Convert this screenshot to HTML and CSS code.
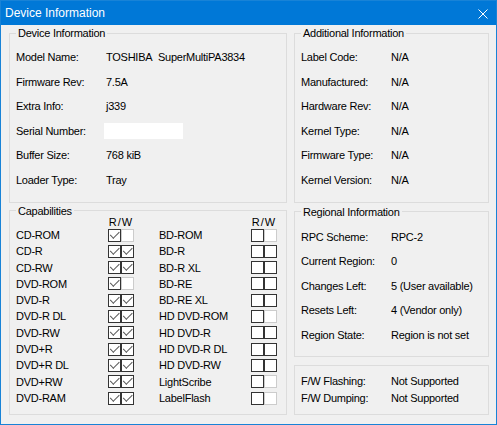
FILE: index.html
```html
<!DOCTYPE html>
<html>
<head>
<meta charset="utf-8">
<title>Device Information</title>
<link rel="stylesheet" href="styles.css">
</head>
<body>
<div class="window">
  <div class="titlebar">
    <span class="title">Device Information</span>
    <svg class="close" width="10" height="10" viewBox="0 0 10 10"><path d="M0.5 0.5 L9.5 9.5 M9.5 0.5 L0.5 9.5" stroke="#fff" stroke-width="1" fill="none"/></svg>
  </div>
  <div class="content">
    <div class="col">
      <fieldset class="grp grp-dev">
        <legend>Device Information</legend>
        <div class="info">
          <span>Model Name:</span><span>TOSHIBA&nbsp; SuperMultiPA3834</span>
          <span>Firmware Rev:</span><span>7.5A</span>
          <span>Extra Info:</span><span>j339</span>
          <span>Serial Number:</span><span class="serialcell"><span class="serial"></span></span>
          <span>Buffer Size:</span><span>768 kiB</span>
          <span>Loader Type:</span><span>Tray</span>
        </div>
      </fieldset>
      <fieldset class="grp grp-cap">
        <legend>Capabilities</legend>
        <div class="caps">
          <div class="capcol">
            <div class="caphead"><span></span><span class="rw">R/W</span></div>
            <div class="cap"><span>CD-ROM</span><span class="pair"><i class="cb on"></i><i class="cb dis"></i></span></div>
            <div class="cap"><span>CD-R</span><span class="pair"><i class="cb on"></i><i class="cb on"></i></span></div>
            <div class="cap"><span>CD-RW</span><span class="pair"><i class="cb on"></i><i class="cb on"></i></span></div>
            <div class="cap"><span>DVD-ROM</span><span class="pair"><i class="cb on"></i><i class="cb dis"></i></span></div>
            <div class="cap"><span>DVD-R</span><span class="pair"><i class="cb on"></i><i class="cb on"></i></span></div>
            <div class="cap"><span>DVD-R DL</span><span class="pair"><i class="cb on"></i><i class="cb on"></i></span></div>
            <div class="cap"><span>DVD-RW</span><span class="pair"><i class="cb on"></i><i class="cb on"></i></span></div>
            <div class="cap"><span>DVD+R</span><span class="pair"><i class="cb on"></i><i class="cb on"></i></span></div>
            <div class="cap"><span>DVD+R DL</span><span class="pair"><i class="cb on"></i><i class="cb on"></i></span></div>
            <div class="cap"><span>DVD+RW</span><span class="pair"><i class="cb on"></i><i class="cb on"></i></span></div>
            <div class="cap"><span>DVD-RAM</span><span class="pair"><i class="cb on"></i><i class="cb on"></i></span></div>
          </div>
          <div class="capcol">
            <div class="caphead"><span></span><span class="rw">R/W</span></div>
            <div class="cap"><span>BD-ROM</span><span class="pair"><i class="cb"></i><i class="cb dis"></i></span></div>
            <div class="cap"><span>BD-R</span><span class="pair"><i class="cb"></i><i class="cb"></i></span></div>
            <div class="cap"><span>BD-R XL</span><span class="pair"><i class="cb"></i><i class="cb"></i></span></div>
            <div class="cap"><span>BD-RE</span><span class="pair"><i class="cb"></i><i class="cb"></i></span></div>
            <div class="cap"><span>BD-RE XL</span><span class="pair"><i class="cb"></i><i class="cb"></i></span></div>
            <div class="cap"><span>HD DVD-ROM</span><span class="pair"><i class="cb"></i><i class="cb dis"></i></span></div>
            <div class="cap"><span>HD DVD-R</span><span class="pair"><i class="cb"></i><i class="cb"></i></span></div>
            <div class="cap"><span>HD DVD-R DL</span><span class="pair"><i class="cb"></i><i class="cb"></i></span></div>
            <div class="cap"><span>HD DVD-RW</span><span class="pair"><i class="cb"></i><i class="cb"></i></span></div>
            <div class="cap"><span>LightScribe</span><span class="pair"><i class="cb"></i><i class="cb dis"></i></span></div>
            <div class="cap"><span>LabelFlash</span><span class="pair"><i class="cb"></i><i class="cb dis"></i></span></div>
          </div>
        </div>
      </fieldset>
    </div>
    <div class="col">
      <fieldset class="grp grp-dev">
        <legend>Additional Information</legend>
        <div class="info">
          <span>Label Code:</span><span>N/A</span>
          <span>Manufactured:</span><span>N/A</span>
          <span>Hardware Rev:</span><span>N/A</span>
          <span>Kernel Type:</span><span>N/A</span>
          <span>Firmware Type:</span><span>N/A</span>
          <span>Kernel Version:</span><span>N/A</span>
        </div>
      </fieldset>
      <fieldset class="grp grp-reg">
        <legend>Regional Information</legend>
        <div class="info info-reg">
          <span>RPC Scheme:</span><span>RPC-2</span>
          <span>Current Region:</span><span>0</span>
          <span>Changes Left:</span><span>5 (User available)</span>
          <span>Resets Left:</span><span>4 (Vendor only)</span>
          <span>Region State:</span><span>Region is not set</span>
        </div>
      </fieldset>
      <div class="grp grp-fw">
        <div class="info info-fw">
          <span>F/W Flashing:</span><span>Not Supported</span>
          <span>F/W Dumping:</span><span>Not Supported</span>
        </div>
      </div>
    </div>
  </div>
</div>
</body>
</html>
```

FILE: styles.css
```css
html, body {
  margin: 0;
  padding: 0;
  background: #f0f0f0;
}

body {
  font-family: "Liberation Sans", Arial, sans-serif;
  font-size: 11px;
  color: #000;
}

.window {
  width: 497px;
  height: 425px;
  box-sizing: border-box;
  border: 1px solid #1883d7;
  background: #f0f0f0;
  overflow: hidden;
}

.titlebar {
  height: 24px;
  background: #0078d7;
  color: #fff;
  display: flex;
  justify-content: space-between;
  align-items: flex-start;
  padding-left: 4px;
}

.title {
  font-size: 12px;
  line-height: 24px;
}

.close {
  display: block;
  margin-top: 8px;
  margin-right: 8px;
}

.content {
  display: grid;
  grid-template-columns: 278px 195px;
  column-gap: 7px;
  padding: 0 7px 0 8px;
  letter-spacing: -0.25px;
}

.col {
  display: flex;
  flex-direction: column;
}

.grp {
  margin: 0;
  border: 1px solid #dcdcdc;
  padding: 0 6px;
  min-width: 0;
}

legend {
  padding: 0 2px;
  line-height: 14px;
  font-size: 11px;
}

.grp-dev {
  margin-top: 1px;
  padding-top: 5px;
  padding-bottom: 9.4px;
}

.grp-cap {
  margin-top: 1px;
  padding-top: 0;
  padding-bottom: 7.7px;
}

.grp-reg {
  margin-top: 2px;
  padding-top: 5.75px;
  padding-bottom: 8.75px;
}

.grp-fw {
  margin-top: 8px;
  padding-top: 7.5px;
  padding-bottom: 6.5px;
}

.info {
  display: grid;
  grid-template-columns: 90px 1fr;
  grid-auto-rows: 24.6px;
  line-height: 24.6px;
  white-space: nowrap;
}

.info-reg {
  grid-auto-rows: 24.5px;
  line-height: 24.5px;
}

.info-fw {
  grid-auto-rows: 17px;
  line-height: 17px;
}

.serialcell {
  display: flex;
  align-items: center;
}

.serial {
  display: block;
  width: 79px;
  height: 16px;
  margin-left: -2px;
  background: #fff;
}

.caps {
  display: flex;
  column-gap: 25px;
}

.capcol {
  display: flex;
  flex-direction: column;
}

.caphead,
.cap {
  display: grid;
  grid-template-columns: 92px 26px;
}

.caphead {
  height: 9px;
  line-height: 9px;
}

.rw {
  text-align: center;
  letter-spacing: 1px;
}

.cap {
  height: 16.3px;
  line-height: 16.3px;
  white-space: nowrap;
}

.pair {
  display: flex;
  align-items: center;
}

.cb {
  display: block;
  position: relative;
  width: 13px;
  height: 13px;
  box-sizing: border-box;
  border: 1px solid #333;
  background: #fff;
}

.cb.dis {
  border-color: #cccccc;
}

.cb.on::after {
  content: "";
  position: absolute;
  box-sizing: border-box;
  left: 3.5px;
  top: 4px;
  width: 9px;
  height: 4.5px;
  border-left: 1px solid #555;
  border-bottom: 1px solid #555;
  transform-origin: left bottom;
  transform: rotate(-45deg);
}
```
